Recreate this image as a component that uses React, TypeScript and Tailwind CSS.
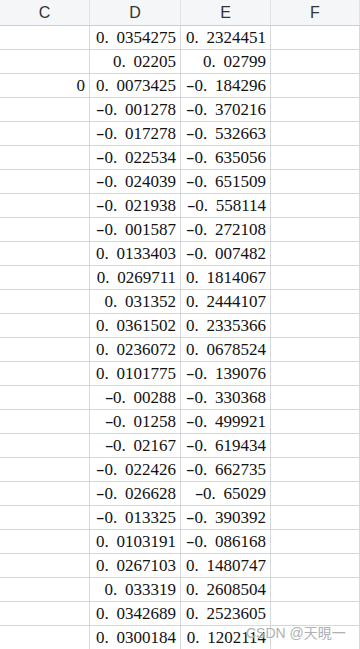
const rows: [string, string, string][] = [
  ['', '0.0354275', '0.2324451'],
  ['', '0.02205', '0.02799'],
  ['0', '0.0073425', '-0.184296'],
  ['', '-0.001278', '-0.370216'],
  ['', '-0.017278', '-0.532663'],
  ['', '-0.022534', '-0.635056'],
  ['', '-0.024039', '-0.651509'],
  ['', '-0.021938', '-0.558114'],
  ['', '-0.001587', '-0.272108'],
  ['', '0.0133403', '-0.007482'],
  ['', '0.0269711', '0.1814067'],
  ['', '0.031352', '0.2444107'],
  ['', '0.0361502', '0.2335366'],
  ['', '0.0236072', '0.0678524'],
  ['', '0.0101775', '-0.139076'],
  ['', '-0.00288', '-0.330368'],
  ['', '-0.01258', '-0.499921'],
  ['', '-0.02167', '-0.619434'],
  ['', '-0.022426', '-0.662735'],
  ['', '-0.026628', '-0.65029'],
  ['', '-0.013325', '-0.390392'],
  ['', '0.0103191', '-0.086168'],
  ['', '0.0267103', '0.1480747'],
  ['', '0.033319', '0.2608504'],
  ['', '0.0342689', '0.2523605'],
  ['', '0.0300184', '0.1202114'],
]

const widths = ['w-[90px]', 'w-[91px]', 'w-[90px]', 'w-[89px]']

function Num({ value }: { value: string }) {
  if (!value.includes('.')) return <span>{value}</span>
  const neg = value.startsWith('-')
  const [int, frac] = value.replace('-', '').split('.')
  return (
    <span>
      {neg && <span className="inline-block w-[8.5px] text-center scale-x-[1.5]">-</span>}
      {int}
      <span className="inline-block w-3 text-left">.</span>
      {frac}
    </span>
  )
}

export default function App() {
  return (
    <div className="relative w-[360px] h-[649px] overflow-hidden bg-white">
      <div className="flex h-[26px] bg-[#f5f6f8] border-b border-[#c9cdd4]">
        {['C', 'D', 'E', 'F'].map((c, i) => (
          <div
            key={c}
            className={`${widths[i]} shrink-0 flex items-center justify-center border-r border-[#dfe2e6] text-[16px] text-[#333] font-['Liberation_Sans',sans-serif]`}
          >
            {c}
          </div>
        ))}
      </div>

      {rows.map((r, ri) => (
        <div key={ri} className="flex h-6 border-b border-[#d5d8dd]">
          {[...r, ''].map((v, ci) => (
            <div
              key={ci}
              className={`${widths[ci]} shrink-0 border-r border-[#d5d8dd] pr-[4px] pt-[1px] text-right text-[17px] leading-[22px] text-[#111] whitespace-nowrap font-['Liberation_Serif',serif]`}
            >
              <Num value={v} />
            </div>
          ))}
        </div>
      ))}

      <div className="absolute left-[246px] top-[623px] text-[14px] text-[#a9a9a9] opacity-90 font-['Liberation_Sans','Noto_Sans_CJK_SC',sans-serif] [text-shadow:0_0_1px_#fff]">
        CSDN @天晛一
      </div>
    </div>
  )
}
